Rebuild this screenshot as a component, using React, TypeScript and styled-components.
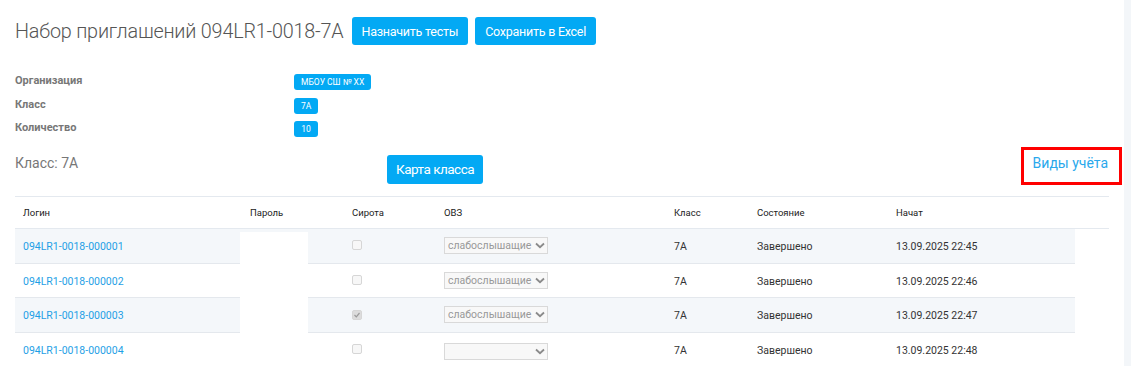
import React from "react";
import styled, { createGlobalStyle } from "styled-components";

const Global = createGlobalStyle`
  html, body { margin: 0; padding: 0; background: #ffffff; }
  body { font-family: Roboto, "Noto Sans", Arial, sans-serif; }
  * { box-sizing: border-box; }
`;

const Page = styled.div`
  display: flex;
  width: 1131px;
  height: 366px;
  overflow: hidden;
`;

const Panel = styled.div`
  width: 1124px;
  padding: 17px 15px 0 15px;
  background: #ffffff;
`;

const Strip = styled.div`
  flex: 1;
  background: #f3f6f9;
`;

const TitleBar = styled.div`
  display: flex;
  align-items: center;
  height: 28px;
`;

const Title = styled.h1`
  margin: 0 8px 0 0;
  font-size: 19.8px;
  font-weight: 300;
  color: #555;
  letter-spacing: -0.2px;
`;

const Button = styled.button<{ $large?: boolean }>`
  display: block;
  height: ${(p) => (p.$large ? 29 : 28)}px;
  padding: 0 ${(p) => (p.$large ? 9 : 10)}px;
  margin-right: 7px;
  border: none;
  border-radius: 3px;
  background: #03a9f4;
  color: #fff;
  font-family: inherit;
  font-size: ${(p) => (p.$large ? 13.5 : 12.5)}px;
  letter-spacing: ${(p) => (p.$large ? "-0.5px" : "-0.25px")};
  cursor: pointer;
`;

const Info = styled.div`
  margin-top: 29px;
  display: grid;
  grid-template-columns: 279px auto;
  grid-auto-rows: 23.5px;
  justify-items: start;
`;

const InfoLabel = styled.div`
  font-size: 11px;
  font-weight: 700;
  color: #777;
  line-height: 13px;
`;

const Badge = styled.span`
  display: inline-flex;
  align-items: center;
  height: 16px;
  min-width: 24px;
  justify-content: center;
  padding: 0 7px;
  border-radius: 3px;
  background: #03a9f4;
  color: #fff;
  font-size: 8.5px;
  font-weight: 400;
`;

const ClassRow = styled.div`
  margin-top: 8px;
  display: flex;
  align-items: flex-start;
  width: 1094px;
`;

const ClassLabel = styled.div`
  width: 372px;
  font-size: 14px;
  line-height: 20px;
  color: #777;
`;

const ButtonWrap = styled.div`
  display: flex;
  padding-top: 2px;
`;

const Spacer = styled.div`
  flex: 1;
`;

const AccountLink = styled.a`
  position: relative;
  font-size: 14px;
  line-height: 20px;
  color: #29a8ec;
  text-decoration: none;
  margin-right: 1px;
  &::after {
    content: "";
    position: absolute;
    left: -12px;
    right: -14px;
    top: -6px;
    bottom: -12px;
    border: 3px solid #ff0000;
  }
`;

const Table = styled.div`
  margin-top: 12.5px;
  position: relative;
  width: 1094px;
`;

const cols = "227px 102px 92px 230px 83px 139px";

const HeadRow = styled.div`
  display: grid;
  grid-template-columns: ${cols} 1fr;
  align-items: center;
  height: 33px;
  border-top: 1px solid #e4e9ef;
  border-bottom: 1px solid #e4e9ef;
`;

const HeadCell = styled.div`
  padding-left: 8px;
  font-size: 9.5px;
  font-weight: 400;
  color: #222;
`;

const BodyRow = styled.div<{ $striped?: boolean }>`
  display: grid;
  grid-template-columns: ${cols} 187px;
  align-items: center;
  width: 1060px;
  height: 34.5px;
  padding-top: 2px;
  border-bottom: 1px solid #e4e8ed;
  background: ${(p) => (p.$striped ? "#f4f7fa" : "#ffffff")};
`;

const Cell = styled.div`
  padding-left: 8px;
  font-size: 10.5px;
  color: #333;
`;

const LoginLink = styled.a`
  font-size: 10.5px;
  color: #1f9fe6;
  text-decoration: none;
`;

const CheckBox = styled.span<{ $checked?: boolean }>`
  display: inline-flex;
  align-items: center;
  justify-content: center;
  width: 10px;
  height: 10px;
  border: 1px solid #d6d6d6;
  border-radius: 2px;
  background: ${(p) => (p.$checked ? "#dcdcdc" : "#f7f7f7")};
  margin-top: -6px;
`;

const Select = styled.span`
  display: inline-flex;
  align-items: center;
  justify-content: space-between;
  width: 104px;
  height: 17px;
  padding: 0 2px 0 3px;
  border: 1px solid #d9d9d9;
  background: #f8f8f8;
  color: #999;
  font-size: 10.5px;
  white-space: nowrap;
  margin-top: -2px;
`;

const Redaction = styled.div`
  position: absolute;
  left: 225px;
  top: 36px;
  width: 68px;
  height: 102px;
  background: #ffffff;
`;

const Chevron = () => (
  <svg width="10" height="7" viewBox="0 0 10 7" style={{ flexShrink: 0 }}>
    <path d="M1 1.5 L5 5.2 L9 1.5" fill="none" stroke="#8a8a8a" strokeWidth="1.8" />
  </svg>
);

const Tick = () => (
  <svg width="8" height="8" viewBox="0 0 8 8">
    <path d="M1.5 4 L3.3 5.8 L6.5 2" fill="none" stroke="#9a9a9a" strokeWidth="1.2" />
  </svg>
);

const rows = [
  { login: "094LR1-0018-000001", checked: false, ovz: "слабослышащие", time: "13.09.2025 22:45" },
  { login: "094LR1-0018-000002", checked: false, ovz: "слабослышащие", time: "13.09.2025 22:46" },
  { login: "094LR1-0018-000003", checked: true, ovz: "слабослышащие", time: "13.09.2025 22:47" },
  { login: "094LR1-0018-000004", checked: false, ovz: "", time: "13.09.2025 22:48" },
];

export default function App() {
  return (
    <>
      <Global />
      <Page>
        <Panel>
          <TitleBar>
            <Title>Набор приглашений 094LR1-0018-7A</Title>
            <Button>Назначить тесты</Button>
            <Button>Сохранить в Excel</Button>
          </TitleBar>
          <Info>
            <InfoLabel>Организация</InfoLabel>
            <Badge>МБОУ СШ № ХХ</Badge>
            <InfoLabel>Класс</InfoLabel>
            <Badge>7А</Badge>
            <InfoLabel>Количество</InfoLabel>
            <Badge>10</Badge>
          </Info>
          <ClassRow>
            <ClassLabel>Класс: 7А</ClassLabel>
            <ButtonWrap>
              <Button $large>Карта класса</Button>
            </ButtonWrap>
            <Spacer />
            <AccountLink href="#">Виды учёта</AccountLink>
          </ClassRow>
          <Table>
            <HeadRow>
              <HeadCell>Логин</HeadCell>
              <HeadCell>Пароль</HeadCell>
              <HeadCell>Сирота</HeadCell>
              <HeadCell>ОВЗ</HeadCell>
              <HeadCell>Класс</HeadCell>
              <HeadCell>Состояние</HeadCell>
              <HeadCell>Начат</HeadCell>
            </HeadRow>
            {rows.map((r, i) => (
              <BodyRow key={r.login} $striped={i % 2 === 0}>
                <Cell>
                  <LoginLink href="#">{r.login}</LoginLink>
                </Cell>
                <Cell />
                <Cell>
                  <CheckBox $checked={r.checked}>{r.checked && <Tick />}</CheckBox>
                </Cell>
                <Cell>
                  <Select>
                    <span>{r.ovz}</span>
                    <Chevron />
                  </Select>
                </Cell>
                <Cell>7А</Cell>
                <Cell>Завершено</Cell>
                <Cell>{r.time}</Cell>
              </BodyRow>
            ))}
            <Redaction />
          </Table>
        </Panel>
        <Strip />
      </Page>
    </>
  );
}
